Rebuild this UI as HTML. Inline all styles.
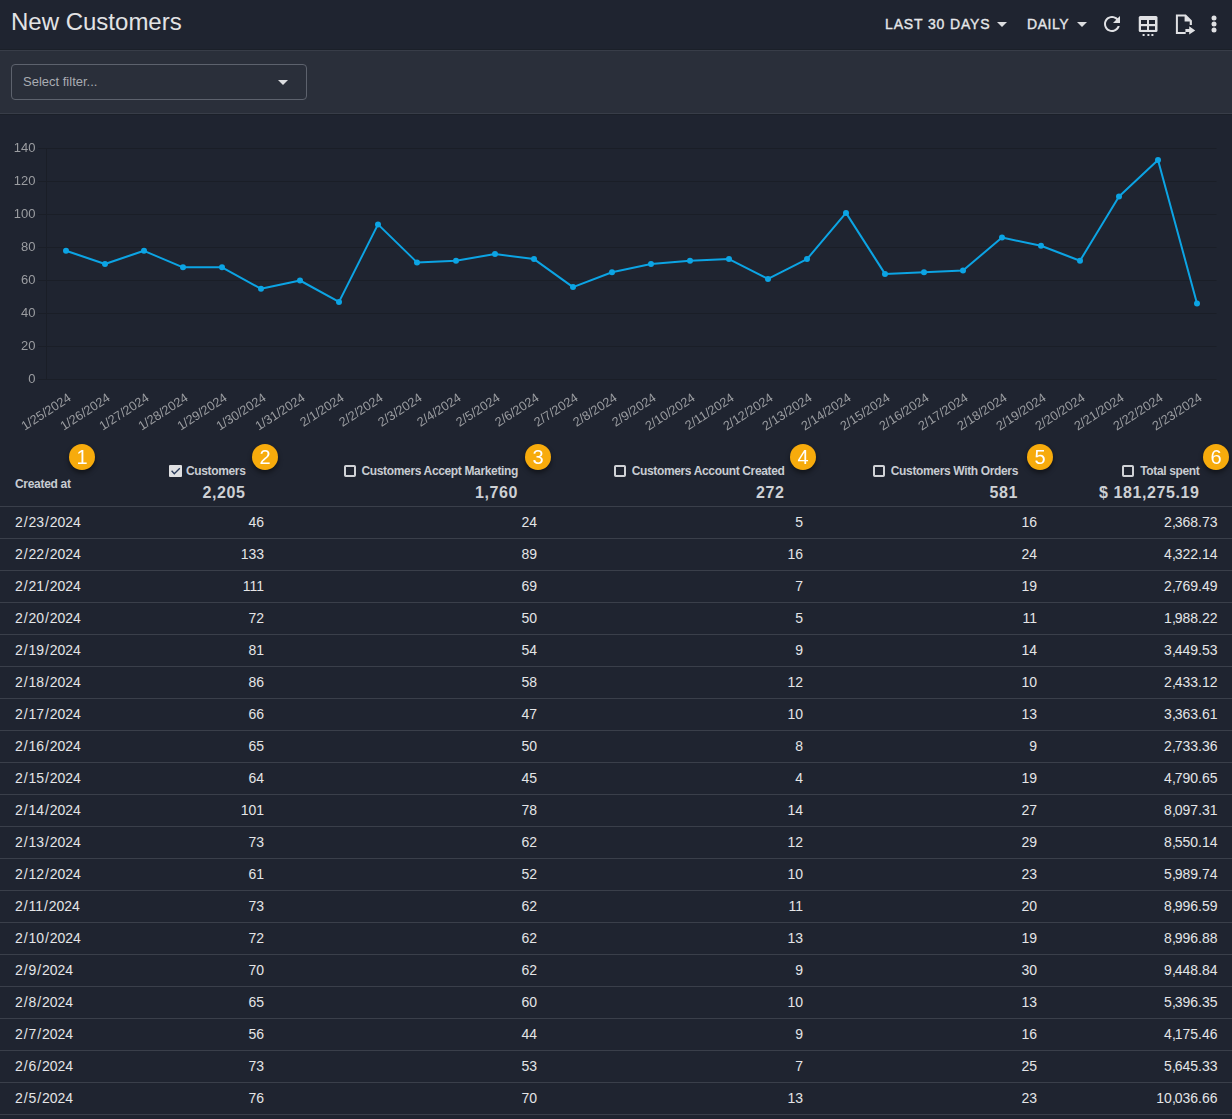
<!DOCTYPE html>
<html><head><meta charset="utf-8"><style>
*{margin:0;padding:0;box-sizing:border-box}
html,body{width:1232px;height:1119px;overflow:hidden;background:#1f2430;font-family:"Liberation Sans", sans-serif;}
.a{position:absolute;white-space:nowrap;line-height:1}
.r{text-align:right}
</style></head><body>

<div class="a" style="left:11px;top:10px;font-size:24px;color:#e2e3e5">New Customers</div>
<div class="a" style="left:885px;top:17px;font-size:14px;letter-spacing:0.86px;-webkit-text-stroke:0.35px #e6e7e9;color:#e6e7e9">LAST 30 DAYS</div>
<svg class="a" style="left:997px;top:22px" width="10" height="5"><path d="M0 0H10L5 5Z" fill="#dcdde0"/></svg>
<div class="a" style="left:1027px;top:17px;font-size:14px;letter-spacing:0.55px;-webkit-text-stroke:0.35px #e6e7e9;color:#e6e7e9">DAILY</div>
<svg class="a" style="left:1077px;top:22px" width="10" height="5"><path d="M0 0H10L5 5Z" fill="#dcdde0"/></svg>
<svg class="a" style="left:1100px;top:12px" width="24" height="24" viewBox="0 0 24 24"><path fill="#e0e1e4" d="M17.65 6.35C16.2 4.9 14.21 4 12 4c-4.42 0-7.99 3.58-7.99 8s3.57 8 7.99 8c3.73 0 6.84-2.55 7.73-6h-2.08c-.82 2.33-3.04 4-5.65 4-3.31 0-6-2.69-6-6s2.69-6 6-6c1.66 0 3.14.69 4.22 1.78L13 11h7V4l-2.35 2.35z"/></svg>
<svg class="a" style="left:1136px;top:12px" width="24" height="26" viewBox="0 0 24 26"><rect x="2.75" y="4" width="18.75" height="16" rx="1.5" fill="#e0e1e4"/><rect x="5" y="8" width="6" height="4" fill="#1f2430"/><rect x="13" y="8" width="6" height="4" fill="#1f2430"/><rect x="5" y="14.2" width="6" height="3.7" fill="#1f2430"/><rect x="13" y="14.2" width="6" height="3.7" fill="#1f2430"/><rect x="6.6" y="22" width="2" height="2" fill="#e0e1e4"/><rect x="11.4" y="22" width="2" height="2" fill="#e0e1e4"/><rect x="15.4" y="22" width="2" height="2" fill="#e0e1e4"/></svg>
<svg class="a" style="left:1172px;top:12px" width="26" height="26" viewBox="0 0 26 26"><path fill="#e0e1e4" d="M3.9 2.5H13.9L19.9 8.5V12.9H17.7V9.6H12.6V4.6H5.9V19.9H13.7V22.1H3.9Z"/><path fill="#e0e1e4" d="M13.4 17H17.2V14.2L23.2 18.4L17.2 22.6V19.9H13.4Z"/></svg>
<svg class="a" style="left:1202px;top:12px" width="24" height="24" viewBox="0 0 24 24"><circle cx="12" cy="6" r="2.5" fill="#e0e1e4"/><circle cx="12" cy="12" r="2.5" fill="#e0e1e4"/><circle cx="12" cy="18" r="2.5" fill="#e0e1e4"/></svg>
<div class="a" style="left:0;top:49px;width:1232px;height:1px;background:#1b2029"></div>
<div class="a" style="left:0;top:50px;width:1232px;height:64px;background:#2a2f3a;border-top:1px solid #383d48;border-bottom:1px solid #383d48"></div>
<div class="a" style="left:0;top:114px;width:1232px;height:1px;background:#1b2029"></div>
<div class="a" style="left:11px;top:64px;width:296px;height:36px;border:1px solid #5d626d;border-radius:4px"></div>
<div class="a" style="left:23px;top:75px;font-size:13px;color:#a9acb2">Select filter...</div>
<svg class="a" style="left:278px;top:80px" width="10" height="5"><path d="M0 0H10L5 5Z" fill="#dcdde0"/></svg>
<svg class="a" style="left:0;top:0;will-change:transform" width="1232" height="440"><line x1="38" y1="379.5" x2="1216.5" y2="379.5" stroke="#1a1e27" stroke-width="1"/><text x="35.5" y="383.3" text-anchor="end" font-size="13" fill="#9b9da1" font-family="Liberation Sans">0</text><line x1="38" y1="346.5" x2="1216.5" y2="346.5" stroke="#1a1e27" stroke-width="1"/><text x="35.5" y="350.3" text-anchor="end" font-size="13" fill="#9b9da1" font-family="Liberation Sans">20</text><line x1="38" y1="313.5" x2="1216.5" y2="313.5" stroke="#1a1e27" stroke-width="1"/><text x="35.5" y="317.3" text-anchor="end" font-size="13" fill="#9b9da1" font-family="Liberation Sans">40</text><line x1="38" y1="280.5" x2="1216.5" y2="280.5" stroke="#1a1e27" stroke-width="1"/><text x="35.5" y="284.3" text-anchor="end" font-size="13" fill="#9b9da1" font-family="Liberation Sans">60</text><line x1="38" y1="247.5" x2="1216.5" y2="247.5" stroke="#1a1e27" stroke-width="1"/><text x="35.5" y="251.3" text-anchor="end" font-size="13" fill="#9b9da1" font-family="Liberation Sans">80</text><line x1="38" y1="214.5" x2="1216.5" y2="214.5" stroke="#1a1e27" stroke-width="1"/><text x="35.5" y="218.3" text-anchor="end" font-size="13" fill="#9b9da1" font-family="Liberation Sans">100</text><line x1="38" y1="181.5" x2="1216.5" y2="181.5" stroke="#1a1e27" stroke-width="1"/><text x="35.5" y="185.3" text-anchor="end" font-size="13" fill="#9b9da1" font-family="Liberation Sans">120</text><line x1="38" y1="148.5" x2="1216.5" y2="148.5" stroke="#1a1e27" stroke-width="1"/><text x="35.5" y="152.3" text-anchor="end" font-size="13" fill="#9b9da1" font-family="Liberation Sans">140</text><line x1="46.5" y1="148" x2="46.5" y2="380" stroke="#1a1e27" stroke-width="1"/><polyline fill="none" stroke="#0ca4e4" stroke-width="2" stroke-linejoin="round" points="66.0,250.8 105.0,264.0 144.0,250.8 183.0,267.3 222.0,267.3 261.0,288.8 300.0,280.5 339.0,301.9 378.0,224.4 417.0,262.4 456.0,260.7 495.0,254.1 534.0,259.1 573.0,287.1 612.0,272.2 651.0,264.0 690.0,260.7 729.0,259.1 768.0,278.9 807.0,259.1 846.0,212.9 885.0,273.9 924.0,272.2 963.0,270.6 1002.0,237.6 1041.0,245.8 1080.0,260.7 1119.0,196.4 1158.0,160.1 1197.0,303.6"/><circle cx="66.0" cy="250.8" r="3" fill="#0ca4e4"/><circle cx="105.0" cy="264.0" r="3" fill="#0ca4e4"/><circle cx="144.0" cy="250.8" r="3" fill="#0ca4e4"/><circle cx="183.0" cy="267.3" r="3" fill="#0ca4e4"/><circle cx="222.0" cy="267.3" r="3" fill="#0ca4e4"/><circle cx="261.0" cy="288.8" r="3" fill="#0ca4e4"/><circle cx="300.0" cy="280.5" r="3" fill="#0ca4e4"/><circle cx="339.0" cy="301.9" r="3" fill="#0ca4e4"/><circle cx="378.0" cy="224.4" r="3" fill="#0ca4e4"/><circle cx="417.0" cy="262.4" r="3" fill="#0ca4e4"/><circle cx="456.0" cy="260.7" r="3" fill="#0ca4e4"/><circle cx="495.0" cy="254.1" r="3" fill="#0ca4e4"/><circle cx="534.0" cy="259.1" r="3" fill="#0ca4e4"/><circle cx="573.0" cy="287.1" r="3" fill="#0ca4e4"/><circle cx="612.0" cy="272.2" r="3" fill="#0ca4e4"/><circle cx="651.0" cy="264.0" r="3" fill="#0ca4e4"/><circle cx="690.0" cy="260.7" r="3" fill="#0ca4e4"/><circle cx="729.0" cy="259.1" r="3" fill="#0ca4e4"/><circle cx="768.0" cy="278.9" r="3" fill="#0ca4e4"/><circle cx="807.0" cy="259.1" r="3" fill="#0ca4e4"/><circle cx="846.0" cy="212.9" r="3" fill="#0ca4e4"/><circle cx="885.0" cy="273.9" r="3" fill="#0ca4e4"/><circle cx="924.0" cy="272.2" r="3" fill="#0ca4e4"/><circle cx="963.0" cy="270.6" r="3" fill="#0ca4e4"/><circle cx="1002.0" cy="237.6" r="3" fill="#0ca4e4"/><circle cx="1041.0" cy="245.8" r="3" fill="#0ca4e4"/><circle cx="1080.0" cy="260.7" r="3" fill="#0ca4e4"/><circle cx="1119.0" cy="196.4" r="3" fill="#0ca4e4"/><circle cx="1158.0" cy="160.1" r="3" fill="#0ca4e4"/><circle cx="1197.0" cy="303.6" r="3" fill="#0ca4e4"/><text transform="translate(70.2,397.2) rotate(-33)" text-anchor="end" dominant-baseline="middle" font-size="12.7" fill="#9b9da1" font-family="Liberation Sans">1/25/2024</text><text transform="translate(109.2,397.2) rotate(-33)" text-anchor="end" dominant-baseline="middle" font-size="12.7" fill="#9b9da1" font-family="Liberation Sans">1/26/2024</text><text transform="translate(148.2,397.2) rotate(-33)" text-anchor="end" dominant-baseline="middle" font-size="12.7" fill="#9b9da1" font-family="Liberation Sans">1/27/2024</text><text transform="translate(187.2,397.2) rotate(-33)" text-anchor="end" dominant-baseline="middle" font-size="12.7" fill="#9b9da1" font-family="Liberation Sans">1/28/2024</text><text transform="translate(226.2,397.2) rotate(-33)" text-anchor="end" dominant-baseline="middle" font-size="12.7" fill="#9b9da1" font-family="Liberation Sans">1/29/2024</text><text transform="translate(265.2,397.2) rotate(-33)" text-anchor="end" dominant-baseline="middle" font-size="12.7" fill="#9b9da1" font-family="Liberation Sans">1/30/2024</text><text transform="translate(304.2,397.2) rotate(-33)" text-anchor="end" dominant-baseline="middle" font-size="12.7" fill="#9b9da1" font-family="Liberation Sans">1/31/2024</text><text transform="translate(343.2,397.2) rotate(-33)" text-anchor="end" dominant-baseline="middle" font-size="12.7" fill="#9b9da1" font-family="Liberation Sans">2/1/2024</text><text transform="translate(382.2,397.2) rotate(-33)" text-anchor="end" dominant-baseline="middle" font-size="12.7" fill="#9b9da1" font-family="Liberation Sans">2/2/2024</text><text transform="translate(421.2,397.2) rotate(-33)" text-anchor="end" dominant-baseline="middle" font-size="12.7" fill="#9b9da1" font-family="Liberation Sans">2/3/2024</text><text transform="translate(460.2,397.2) rotate(-33)" text-anchor="end" dominant-baseline="middle" font-size="12.7" fill="#9b9da1" font-family="Liberation Sans">2/4/2024</text><text transform="translate(499.2,397.2) rotate(-33)" text-anchor="end" dominant-baseline="middle" font-size="12.7" fill="#9b9da1" font-family="Liberation Sans">2/5/2024</text><text transform="translate(538.2,397.2) rotate(-33)" text-anchor="end" dominant-baseline="middle" font-size="12.7" fill="#9b9da1" font-family="Liberation Sans">2/6/2024</text><text transform="translate(577.2,397.2) rotate(-33)" text-anchor="end" dominant-baseline="middle" font-size="12.7" fill="#9b9da1" font-family="Liberation Sans">2/7/2024</text><text transform="translate(616.2,397.2) rotate(-33)" text-anchor="end" dominant-baseline="middle" font-size="12.7" fill="#9b9da1" font-family="Liberation Sans">2/8/2024</text><text transform="translate(655.2,397.2) rotate(-33)" text-anchor="end" dominant-baseline="middle" font-size="12.7" fill="#9b9da1" font-family="Liberation Sans">2/9/2024</text><text transform="translate(694.2,397.2) rotate(-33)" text-anchor="end" dominant-baseline="middle" font-size="12.7" fill="#9b9da1" font-family="Liberation Sans">2/10/2024</text><text transform="translate(733.2,397.2) rotate(-33)" text-anchor="end" dominant-baseline="middle" font-size="12.7" fill="#9b9da1" font-family="Liberation Sans">2/11/2024</text><text transform="translate(772.2,397.2) rotate(-33)" text-anchor="end" dominant-baseline="middle" font-size="12.7" fill="#9b9da1" font-family="Liberation Sans">2/12/2024</text><text transform="translate(811.2,397.2) rotate(-33)" text-anchor="end" dominant-baseline="middle" font-size="12.7" fill="#9b9da1" font-family="Liberation Sans">2/13/2024</text><text transform="translate(850.2,397.2) rotate(-33)" text-anchor="end" dominant-baseline="middle" font-size="12.7" fill="#9b9da1" font-family="Liberation Sans">2/14/2024</text><text transform="translate(889.2,397.2) rotate(-33)" text-anchor="end" dominant-baseline="middle" font-size="12.7" fill="#9b9da1" font-family="Liberation Sans">2/15/2024</text><text transform="translate(928.2,397.2) rotate(-33)" text-anchor="end" dominant-baseline="middle" font-size="12.7" fill="#9b9da1" font-family="Liberation Sans">2/16/2024</text><text transform="translate(967.2,397.2) rotate(-33)" text-anchor="end" dominant-baseline="middle" font-size="12.7" fill="#9b9da1" font-family="Liberation Sans">2/17/2024</text><text transform="translate(1006.2,397.2) rotate(-33)" text-anchor="end" dominant-baseline="middle" font-size="12.7" fill="#9b9da1" font-family="Liberation Sans">2/18/2024</text><text transform="translate(1045.2,397.2) rotate(-33)" text-anchor="end" dominant-baseline="middle" font-size="12.7" fill="#9b9da1" font-family="Liberation Sans">2/19/2024</text><text transform="translate(1084.2,397.2) rotate(-33)" text-anchor="end" dominant-baseline="middle" font-size="12.7" fill="#9b9da1" font-family="Liberation Sans">2/20/2024</text><text transform="translate(1123.2,397.2) rotate(-33)" text-anchor="end" dominant-baseline="middle" font-size="12.7" fill="#9b9da1" font-family="Liberation Sans">2/21/2024</text><text transform="translate(1162.2,397.2) rotate(-33)" text-anchor="end" dominant-baseline="middle" font-size="12.7" fill="#9b9da1" font-family="Liberation Sans">2/22/2024</text><text transform="translate(1201.2,397.2) rotate(-33)" text-anchor="end" dominant-baseline="middle" font-size="12.7" fill="#9b9da1" font-family="Liberation Sans">2/23/2024</text></svg>
<div class="a" style="left:15px;top:477.7px;font-size:12px;font-weight:bold;color:#c8ccd2;letter-spacing:-0.3px">Created at</div>
<div class="a" style="right:986.5px;top:464.1px;font-size:12px;font-weight:bold;color:#c8ccd2;letter-spacing:-0.35px;display:flex;align-items:center"><svg width="13" height="12" style="margin-right:4px;margin-top:1px" viewBox="0 0 13 12"><rect x="0" y="0" width="13" height="12" rx="1" fill="#dfe0e2"/><path d="M2.6 5.7L5.3 8.8L10.8 3.3" stroke="#2a3b5a" stroke-width="1.3" fill="none"/></svg><span>Customers</span></div>
<div class="a" style="right:986.5px;top:485.3px;font-size:16px;font-weight:bold;letter-spacing:0.6px;color:#cdd0d4">2,205</div>
<div class="a" style="right:714px;top:464.1px;font-size:12px;font-weight:bold;color:#c8ccd2;letter-spacing:-0.35px;display:flex;align-items:center"><svg width="12" height="12" style="margin-right:6px;margin-top:1px" viewBox="0 0 12 12"><rect x="1" y="1" width="10" height="10" rx="0.8" fill="none" stroke="#d0d2d6" stroke-width="2"/></svg><span>Customers Accept Marketing</span></div>
<div class="a" style="right:714px;top:485.3px;font-size:16px;font-weight:bold;letter-spacing:0.6px;color:#cdd0d4">1,760</div>
<div class="a" style="right:447.5px;top:464.1px;font-size:12px;font-weight:bold;color:#c8ccd2;letter-spacing:-0.35px;display:flex;align-items:center"><svg width="12" height="12" style="margin-right:6px;margin-top:1px" viewBox="0 0 12 12"><rect x="1" y="1" width="10" height="10" rx="0.8" fill="none" stroke="#d0d2d6" stroke-width="2"/></svg><span>Customers Account Created</span></div>
<div class="a" style="right:447.5px;top:485.3px;font-size:16px;font-weight:bold;letter-spacing:0.6px;color:#cdd0d4">272</div>
<div class="a" style="right:214px;top:464.1px;font-size:12px;font-weight:bold;color:#c8ccd2;letter-spacing:-0.35px;display:flex;align-items:center"><svg width="12" height="12" style="margin-right:6px;margin-top:1px" viewBox="0 0 12 12"><rect x="1" y="1" width="10" height="10" rx="0.8" fill="none" stroke="#d0d2d6" stroke-width="2"/></svg><span>Customers With Orders</span></div>
<div class="a" style="right:214px;top:485.3px;font-size:16px;font-weight:bold;letter-spacing:0.6px;color:#cdd0d4">581</div>
<div class="a" style="right:32.5px;top:464.1px;font-size:12px;font-weight:bold;color:#c8ccd2;letter-spacing:-0.35px;display:flex;align-items:center"><svg width="12" height="12" style="margin-right:6px;margin-top:1px" viewBox="0 0 12 12"><rect x="1" y="1" width="10" height="10" rx="0.8" fill="none" stroke="#d0d2d6" stroke-width="2"/></svg><span>Total spent</span></div>
<div class="a" style="right:32.5px;top:485.3px;font-size:16px;font-weight:bold;letter-spacing:0.6px;color:#cdd0d4">$ 181,275.19</div>
<div class="a" style="left:69px;top:444px;width:26px;height:26px;border-radius:13px;background:#f7ab0c;box-shadow:0 3px 5px rgba(0,0,0,0.45);color:#fff;font-size:20px;text-align:center;line-height:27px">1</div>
<div class="a" style="left:252px;top:444px;width:26px;height:26px;border-radius:13px;background:#f7ab0c;box-shadow:0 3px 5px rgba(0,0,0,0.45);color:#fff;font-size:20px;text-align:center;line-height:27px">2</div>
<div class="a" style="left:525px;top:444px;width:26px;height:26px;border-radius:13px;background:#f7ab0c;box-shadow:0 3px 5px rgba(0,0,0,0.45);color:#fff;font-size:20px;text-align:center;line-height:27px">3</div>
<div class="a" style="left:790px;top:444px;width:26px;height:26px;border-radius:13px;background:#f7ab0c;box-shadow:0 3px 5px rgba(0,0,0,0.45);color:#fff;font-size:20px;text-align:center;line-height:27px">4</div>
<div class="a" style="left:1027px;top:444px;width:26px;height:26px;border-radius:13px;background:#f7ab0c;box-shadow:0 3px 5px rgba(0,0,0,0.45);color:#fff;font-size:20px;text-align:center;line-height:27px">5</div>
<div class="a" style="left:1203px;top:444px;width:26px;height:26px;border-radius:13px;background:#f7ab0c;box-shadow:0 3px 5px rgba(0,0,0,0.45);color:#fff;font-size:20px;text-align:center;line-height:27px">6</div>
<div class="a" style="left:0;top:506px;width:1232px;height:1px;background:#3a3f4a"></div>
<div class="a" style="left:0;top:538px;width:1232px;height:1px;background:#3a3f4a"></div>
<div class="a" style="left:15px;top:515.1px;font-size:14px;color:#e4e5e7">2<span style="margin:0 0.9px">/</span>23<span style="margin:0 0.9px">/</span>2024</div>
<div class="a" style="right:968px;top:515.1px;font-size:14px;color:#e4e5e7">46</div>
<div class="a" style="right:695px;top:515.1px;font-size:14px;color:#e4e5e7">24</div>
<div class="a" style="right:429px;top:515.1px;font-size:14px;color:#e4e5e7">5</div>
<div class="a" style="right:195px;top:515.1px;font-size:14px;color:#e4e5e7">16</div>
<div class="a" style="right:14.5px;top:515.1px;font-size:14px;color:#e4e5e7">2<span style="letter-spacing:-1.1px">,</span>368.73</div>
<div class="a" style="left:0;top:570px;width:1232px;height:1px;background:#3a3f4a"></div>
<div class="a" style="left:15px;top:547.1px;font-size:14px;color:#e4e5e7">2<span style="margin:0 0.9px">/</span>22<span style="margin:0 0.9px">/</span>2024</div>
<div class="a" style="right:968px;top:547.1px;font-size:14px;color:#e4e5e7">133</div>
<div class="a" style="right:695px;top:547.1px;font-size:14px;color:#e4e5e7">89</div>
<div class="a" style="right:429px;top:547.1px;font-size:14px;color:#e4e5e7">16</div>
<div class="a" style="right:195px;top:547.1px;font-size:14px;color:#e4e5e7">24</div>
<div class="a" style="right:14.5px;top:547.1px;font-size:14px;color:#e4e5e7">4<span style="letter-spacing:-1.1px">,</span>322.14</div>
<div class="a" style="left:0;top:602px;width:1232px;height:1px;background:#3a3f4a"></div>
<div class="a" style="left:15px;top:579.1px;font-size:14px;color:#e4e5e7">2<span style="margin:0 0.9px">/</span>21<span style="margin:0 0.9px">/</span>2024</div>
<div class="a" style="right:968px;top:579.1px;font-size:14px;color:#e4e5e7">111</div>
<div class="a" style="right:695px;top:579.1px;font-size:14px;color:#e4e5e7">69</div>
<div class="a" style="right:429px;top:579.1px;font-size:14px;color:#e4e5e7">7</div>
<div class="a" style="right:195px;top:579.1px;font-size:14px;color:#e4e5e7">19</div>
<div class="a" style="right:14.5px;top:579.1px;font-size:14px;color:#e4e5e7">2<span style="letter-spacing:-1.1px">,</span>769.49</div>
<div class="a" style="left:0;top:634px;width:1232px;height:1px;background:#3a3f4a"></div>
<div class="a" style="left:15px;top:611.1px;font-size:14px;color:#e4e5e7">2<span style="margin:0 0.9px">/</span>20<span style="margin:0 0.9px">/</span>2024</div>
<div class="a" style="right:968px;top:611.1px;font-size:14px;color:#e4e5e7">72</div>
<div class="a" style="right:695px;top:611.1px;font-size:14px;color:#e4e5e7">50</div>
<div class="a" style="right:429px;top:611.1px;font-size:14px;color:#e4e5e7">5</div>
<div class="a" style="right:195px;top:611.1px;font-size:14px;color:#e4e5e7">11</div>
<div class="a" style="right:14.5px;top:611.1px;font-size:14px;color:#e4e5e7">1<span style="letter-spacing:-1.1px">,</span>988.22</div>
<div class="a" style="left:0;top:666px;width:1232px;height:1px;background:#3a3f4a"></div>
<div class="a" style="left:15px;top:643.1px;font-size:14px;color:#e4e5e7">2<span style="margin:0 0.9px">/</span>19<span style="margin:0 0.9px">/</span>2024</div>
<div class="a" style="right:968px;top:643.1px;font-size:14px;color:#e4e5e7">81</div>
<div class="a" style="right:695px;top:643.1px;font-size:14px;color:#e4e5e7">54</div>
<div class="a" style="right:429px;top:643.1px;font-size:14px;color:#e4e5e7">9</div>
<div class="a" style="right:195px;top:643.1px;font-size:14px;color:#e4e5e7">14</div>
<div class="a" style="right:14.5px;top:643.1px;font-size:14px;color:#e4e5e7">3<span style="letter-spacing:-1.1px">,</span>449.53</div>
<div class="a" style="left:0;top:698px;width:1232px;height:1px;background:#3a3f4a"></div>
<div class="a" style="left:15px;top:675.1px;font-size:14px;color:#e4e5e7">2<span style="margin:0 0.9px">/</span>18<span style="margin:0 0.9px">/</span>2024</div>
<div class="a" style="right:968px;top:675.1px;font-size:14px;color:#e4e5e7">86</div>
<div class="a" style="right:695px;top:675.1px;font-size:14px;color:#e4e5e7">58</div>
<div class="a" style="right:429px;top:675.1px;font-size:14px;color:#e4e5e7">12</div>
<div class="a" style="right:195px;top:675.1px;font-size:14px;color:#e4e5e7">10</div>
<div class="a" style="right:14.5px;top:675.1px;font-size:14px;color:#e4e5e7">2<span style="letter-spacing:-1.1px">,</span>433.12</div>
<div class="a" style="left:0;top:730px;width:1232px;height:1px;background:#3a3f4a"></div>
<div class="a" style="left:15px;top:707.1px;font-size:14px;color:#e4e5e7">2<span style="margin:0 0.9px">/</span>17<span style="margin:0 0.9px">/</span>2024</div>
<div class="a" style="right:968px;top:707.1px;font-size:14px;color:#e4e5e7">66</div>
<div class="a" style="right:695px;top:707.1px;font-size:14px;color:#e4e5e7">47</div>
<div class="a" style="right:429px;top:707.1px;font-size:14px;color:#e4e5e7">10</div>
<div class="a" style="right:195px;top:707.1px;font-size:14px;color:#e4e5e7">13</div>
<div class="a" style="right:14.5px;top:707.1px;font-size:14px;color:#e4e5e7">3<span style="letter-spacing:-1.1px">,</span>363.61</div>
<div class="a" style="left:0;top:762px;width:1232px;height:1px;background:#3a3f4a"></div>
<div class="a" style="left:15px;top:739.1px;font-size:14px;color:#e4e5e7">2<span style="margin:0 0.9px">/</span>16<span style="margin:0 0.9px">/</span>2024</div>
<div class="a" style="right:968px;top:739.1px;font-size:14px;color:#e4e5e7">65</div>
<div class="a" style="right:695px;top:739.1px;font-size:14px;color:#e4e5e7">50</div>
<div class="a" style="right:429px;top:739.1px;font-size:14px;color:#e4e5e7">8</div>
<div class="a" style="right:195px;top:739.1px;font-size:14px;color:#e4e5e7">9</div>
<div class="a" style="right:14.5px;top:739.1px;font-size:14px;color:#e4e5e7">2<span style="letter-spacing:-1.1px">,</span>733.36</div>
<div class="a" style="left:0;top:794px;width:1232px;height:1px;background:#3a3f4a"></div>
<div class="a" style="left:15px;top:771.1px;font-size:14px;color:#e4e5e7">2<span style="margin:0 0.9px">/</span>15<span style="margin:0 0.9px">/</span>2024</div>
<div class="a" style="right:968px;top:771.1px;font-size:14px;color:#e4e5e7">64</div>
<div class="a" style="right:695px;top:771.1px;font-size:14px;color:#e4e5e7">45</div>
<div class="a" style="right:429px;top:771.1px;font-size:14px;color:#e4e5e7">4</div>
<div class="a" style="right:195px;top:771.1px;font-size:14px;color:#e4e5e7">19</div>
<div class="a" style="right:14.5px;top:771.1px;font-size:14px;color:#e4e5e7">4<span style="letter-spacing:-1.1px">,</span>790.65</div>
<div class="a" style="left:0;top:826px;width:1232px;height:1px;background:#3a3f4a"></div>
<div class="a" style="left:15px;top:803.1px;font-size:14px;color:#e4e5e7">2<span style="margin:0 0.9px">/</span>14<span style="margin:0 0.9px">/</span>2024</div>
<div class="a" style="right:968px;top:803.1px;font-size:14px;color:#e4e5e7">101</div>
<div class="a" style="right:695px;top:803.1px;font-size:14px;color:#e4e5e7">78</div>
<div class="a" style="right:429px;top:803.1px;font-size:14px;color:#e4e5e7">14</div>
<div class="a" style="right:195px;top:803.1px;font-size:14px;color:#e4e5e7">27</div>
<div class="a" style="right:14.5px;top:803.1px;font-size:14px;color:#e4e5e7">8<span style="letter-spacing:-1.1px">,</span>097.31</div>
<div class="a" style="left:0;top:858px;width:1232px;height:1px;background:#3a3f4a"></div>
<div class="a" style="left:15px;top:835.1px;font-size:14px;color:#e4e5e7">2<span style="margin:0 0.9px">/</span>13<span style="margin:0 0.9px">/</span>2024</div>
<div class="a" style="right:968px;top:835.1px;font-size:14px;color:#e4e5e7">73</div>
<div class="a" style="right:695px;top:835.1px;font-size:14px;color:#e4e5e7">62</div>
<div class="a" style="right:429px;top:835.1px;font-size:14px;color:#e4e5e7">12</div>
<div class="a" style="right:195px;top:835.1px;font-size:14px;color:#e4e5e7">29</div>
<div class="a" style="right:14.5px;top:835.1px;font-size:14px;color:#e4e5e7">8<span style="letter-spacing:-1.1px">,</span>550.14</div>
<div class="a" style="left:0;top:890px;width:1232px;height:1px;background:#3a3f4a"></div>
<div class="a" style="left:15px;top:867.1px;font-size:14px;color:#e4e5e7">2<span style="margin:0 0.9px">/</span>12<span style="margin:0 0.9px">/</span>2024</div>
<div class="a" style="right:968px;top:867.1px;font-size:14px;color:#e4e5e7">61</div>
<div class="a" style="right:695px;top:867.1px;font-size:14px;color:#e4e5e7">52</div>
<div class="a" style="right:429px;top:867.1px;font-size:14px;color:#e4e5e7">10</div>
<div class="a" style="right:195px;top:867.1px;font-size:14px;color:#e4e5e7">23</div>
<div class="a" style="right:14.5px;top:867.1px;font-size:14px;color:#e4e5e7">5<span style="letter-spacing:-1.1px">,</span>989.74</div>
<div class="a" style="left:0;top:922px;width:1232px;height:1px;background:#3a3f4a"></div>
<div class="a" style="left:15px;top:899.1px;font-size:14px;color:#e4e5e7">2<span style="margin:0 0.9px">/</span>11<span style="margin:0 0.9px">/</span>2024</div>
<div class="a" style="right:968px;top:899.1px;font-size:14px;color:#e4e5e7">73</div>
<div class="a" style="right:695px;top:899.1px;font-size:14px;color:#e4e5e7">62</div>
<div class="a" style="right:429px;top:899.1px;font-size:14px;color:#e4e5e7">11</div>
<div class="a" style="right:195px;top:899.1px;font-size:14px;color:#e4e5e7">20</div>
<div class="a" style="right:14.5px;top:899.1px;font-size:14px;color:#e4e5e7">8<span style="letter-spacing:-1.1px">,</span>996.59</div>
<div class="a" style="left:0;top:954px;width:1232px;height:1px;background:#3a3f4a"></div>
<div class="a" style="left:15px;top:931.1px;font-size:14px;color:#e4e5e7">2<span style="margin:0 0.9px">/</span>10<span style="margin:0 0.9px">/</span>2024</div>
<div class="a" style="right:968px;top:931.1px;font-size:14px;color:#e4e5e7">72</div>
<div class="a" style="right:695px;top:931.1px;font-size:14px;color:#e4e5e7">62</div>
<div class="a" style="right:429px;top:931.1px;font-size:14px;color:#e4e5e7">13</div>
<div class="a" style="right:195px;top:931.1px;font-size:14px;color:#e4e5e7">19</div>
<div class="a" style="right:14.5px;top:931.1px;font-size:14px;color:#e4e5e7">8<span style="letter-spacing:-1.1px">,</span>996.88</div>
<div class="a" style="left:0;top:986px;width:1232px;height:1px;background:#3a3f4a"></div>
<div class="a" style="left:15px;top:963.1px;font-size:14px;color:#e4e5e7">2<span style="margin:0 0.9px">/</span>9<span style="margin:0 0.9px">/</span>2024</div>
<div class="a" style="right:968px;top:963.1px;font-size:14px;color:#e4e5e7">70</div>
<div class="a" style="right:695px;top:963.1px;font-size:14px;color:#e4e5e7">62</div>
<div class="a" style="right:429px;top:963.1px;font-size:14px;color:#e4e5e7">9</div>
<div class="a" style="right:195px;top:963.1px;font-size:14px;color:#e4e5e7">30</div>
<div class="a" style="right:14.5px;top:963.1px;font-size:14px;color:#e4e5e7">9<span style="letter-spacing:-1.1px">,</span>448.84</div>
<div class="a" style="left:0;top:1018px;width:1232px;height:1px;background:#3a3f4a"></div>
<div class="a" style="left:15px;top:995.1px;font-size:14px;color:#e4e5e7">2<span style="margin:0 0.9px">/</span>8<span style="margin:0 0.9px">/</span>2024</div>
<div class="a" style="right:968px;top:995.1px;font-size:14px;color:#e4e5e7">65</div>
<div class="a" style="right:695px;top:995.1px;font-size:14px;color:#e4e5e7">60</div>
<div class="a" style="right:429px;top:995.1px;font-size:14px;color:#e4e5e7">10</div>
<div class="a" style="right:195px;top:995.1px;font-size:14px;color:#e4e5e7">13</div>
<div class="a" style="right:14.5px;top:995.1px;font-size:14px;color:#e4e5e7">5<span style="letter-spacing:-1.1px">,</span>396.35</div>
<div class="a" style="left:0;top:1050px;width:1232px;height:1px;background:#3a3f4a"></div>
<div class="a" style="left:15px;top:1027.1px;font-size:14px;color:#e4e5e7">2<span style="margin:0 0.9px">/</span>7<span style="margin:0 0.9px">/</span>2024</div>
<div class="a" style="right:968px;top:1027.1px;font-size:14px;color:#e4e5e7">56</div>
<div class="a" style="right:695px;top:1027.1px;font-size:14px;color:#e4e5e7">44</div>
<div class="a" style="right:429px;top:1027.1px;font-size:14px;color:#e4e5e7">9</div>
<div class="a" style="right:195px;top:1027.1px;font-size:14px;color:#e4e5e7">16</div>
<div class="a" style="right:14.5px;top:1027.1px;font-size:14px;color:#e4e5e7">4<span style="letter-spacing:-1.1px">,</span>175.46</div>
<div class="a" style="left:0;top:1082px;width:1232px;height:1px;background:#3a3f4a"></div>
<div class="a" style="left:15px;top:1059.1px;font-size:14px;color:#e4e5e7">2<span style="margin:0 0.9px">/</span>6<span style="margin:0 0.9px">/</span>2024</div>
<div class="a" style="right:968px;top:1059.1px;font-size:14px;color:#e4e5e7">73</div>
<div class="a" style="right:695px;top:1059.1px;font-size:14px;color:#e4e5e7">53</div>
<div class="a" style="right:429px;top:1059.1px;font-size:14px;color:#e4e5e7">7</div>
<div class="a" style="right:195px;top:1059.1px;font-size:14px;color:#e4e5e7">25</div>
<div class="a" style="right:14.5px;top:1059.1px;font-size:14px;color:#e4e5e7">5<span style="letter-spacing:-1.1px">,</span>645.33</div>
<div class="a" style="left:0;top:1114px;width:1232px;height:1px;background:#3a3f4a"></div>
<div class="a" style="left:15px;top:1091.1px;font-size:14px;color:#e4e5e7">2<span style="margin:0 0.9px">/</span>5<span style="margin:0 0.9px">/</span>2024</div>
<div class="a" style="right:968px;top:1091.1px;font-size:14px;color:#e4e5e7">76</div>
<div class="a" style="right:695px;top:1091.1px;font-size:14px;color:#e4e5e7">70</div>
<div class="a" style="right:429px;top:1091.1px;font-size:14px;color:#e4e5e7">13</div>
<div class="a" style="right:195px;top:1091.1px;font-size:14px;color:#e4e5e7">23</div>
<div class="a" style="right:14.5px;top:1091.1px;font-size:14px;color:#e4e5e7">10<span style="letter-spacing:-1.1px">,</span>036.66</div>
</body></html>
